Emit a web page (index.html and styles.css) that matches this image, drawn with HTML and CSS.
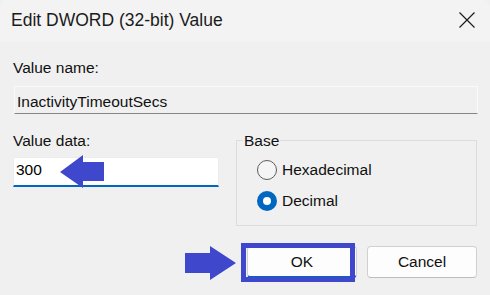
FILE: index.html
```html
<!DOCTYPE html>
<html lang="en">
<head>
    <meta charset="UTF-8">
    <meta name="viewport" content="width=device-width, initial-scale=1.0">
    <title>Edit DWORD (32-bit) Value</title>
    <link rel="stylesheet" href="styles.css">
</head>
<body>
    <div class="window">
        <div class="titlebar">
            <span class="title">Edit DWORD (32-bit) Value</span>
            <svg class="close" width="16" height="16" viewBox="0 0 16 16">
                <path d="M0.5 0.5L15.5 15.5M15.5 0.5L0.5 15.5" stroke="#1b1b1b" stroke-width="1.2" fill="none"/>
            </svg>
        </div>

        <div class="content">
            <div class="label">Value name:</div>
            <div class="name-field">InactivityTimeoutSecs</div>

            <div class="lower">
                <div class="data-col">
                    <div class="label">Value data:</div>
                    <div class="data-field">300</div>
                </div>
                <fieldset class="base">
                    <legend>Base</legend>
                    <div class="radios">
                        <div class="radio"><span class="dot"></span>Hexadecimal</div>
                        <div class="radio"><span class="dot checked"></span>Decimal</div>
                    </div>
                </fieldset>
            </div>

            <div class="buttons">
                <button class="btn ok">OK<span class="highlight"></span></button>
                <button class="btn">Cancel</button>
            </div>
        </div>

        <!-- annotation arrows -->
        <svg class="arrow arrow-left" width="44" height="33" viewBox="0 0 44 33">
            <polygon points="0,17 23,0 23,7 44,7 44,26 23,26 23,33" fill="#3f48cc"/>
        </svg>
        <svg class="arrow arrow-right" width="51" height="34" viewBox="0 0 51 34">
            <polygon points="0,7 25,7 25,0 51,17 25,34 25,27 0,27" fill="#3f48cc"/>
        </svg>
    </div>
</body>
</html>
```

FILE: styles.css
```css
html, body {
    margin: 0;
    padding: 0;
    background-color: #f0f0f0;
}

body {
    font-family: 'Liberation Sans', Arial, sans-serif;
    font-size: 15.5px;
    color: #111;
}

.window {
    position: relative;
    width: 490px;
    height: 295px;
    background-color: #f0f0f0;
    border-radius: 8px 8px 0 0;
    overflow: hidden;
}

.titlebar {
    height: 42px;
    box-sizing: border-box;
    padding: 0 15px 2px 11px;
    display: flex;
    align-items: center;
    justify-content: space-between;
    background-color: #f3f3f3;
}

.title {
    font-size: 17.5px;
    line-height: 20px;
    color: #1b1b1b;
}

.close {
    display: block;
}

.content {
    padding: 16.6px 13px 0 13px;
}

.label {
    line-height: 18px;
}

.name-field {
    height: 28px;
    box-sizing: border-box;
    margin: 9.4px -1px 0 1px;
    padding: 6px 2px 0;
    line-height: 18px;
    background-color: #f0f0f0;
    border: 1px solid #fafafa;
    border-bottom-color: #868686;
}

.lower {
    display: grid;
    grid-template-columns: 206px 1fr;
    column-gap: 17px;
    margin-top: 17.6px;
}

.data-field {
    height: 30px;
    box-sizing: border-box;
    margin-top: 7.7px;
    padding: 3px 2px 0;
    line-height: 18px;
    background-color: #fff;
    border: 1px solid #ececec;
    border-bottom: 2px solid #0067c0;
    color: #000;
}

.base {
    margin: 0;
    padding: 0 0 14px 0;
    min-width: 0;
    border: 1px solid #dcdcdc;
}

.base legend {
    margin-left: 6px;
    padding: 0 1px;
    line-height: 18px;
}

.radios {
    display: flex;
    flex-direction: column;
    gap: 11.5px;
    padding: 10px 0 0 20px;
}

.radio {
    display: flex;
    align-items: center;
    gap: 5px;
    height: 20px;
    line-height: 18px;
}

.dot {
    width: 20px;
    height: 20px;
    box-sizing: border-box;
    border-radius: 50%;
    border: 1px solid #5d5d5d;
    background-color: #f5f5f5;
    position: relative;
}

.dot.checked {
    border: none;
    background-color: #0067c0;
}

.dot.checked::after {
    content: '';
    position: absolute;
    left: 6px;
    top: 6px;
    width: 8px;
    height: 8px;
    border-radius: 50%;
    background-color: #fff;
}

.buttons {
    display: flex;
    justify-content: flex-end;
    gap: 10px;
    margin-top: 20px;
}

.btn {
    position: relative;
    width: 110px;
    height: 32px;
    box-sizing: border-box;
    font-family: inherit;
    font-size: 15.5px;
    line-height: 18px;
    color: #111;
    background-color: #fdfdfd;
    border: 1px solid #d0d0d0;
    border-bottom-color: #bdbdbd;
    border-radius: 4px;
    padding: 0;
}

.btn.ok {
    border-bottom: 2px solid #0067c0;
}

.highlight {
    position: absolute;
    top: -4px;
    left: -7px;
    right: 1px;
    bottom: -6px;
    border: 5px solid #3f48cc;
}

.arrow {
    position: absolute;
    display: block;
}

.arrow-left {
    left: 60px;
    top: 155px;
}

.arrow-right {
    left: 185px;
    top: 246px;
}
```
